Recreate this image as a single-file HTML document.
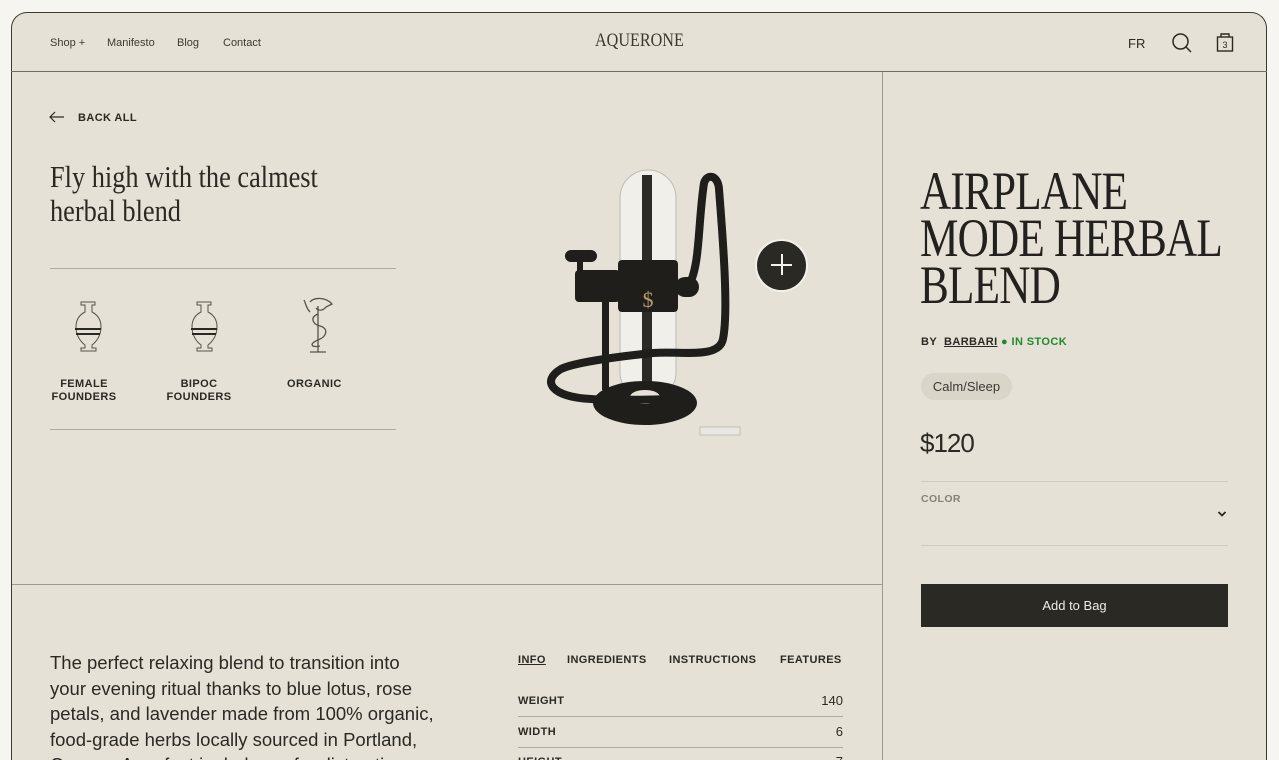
<!DOCTYPE html>
<html><head><meta charset="utf-8"><style>
*{margin:0;padding:0;box-sizing:border-box}
html,body{width:1279px;height:760px;overflow:hidden}
body{background:#f7f5ef;position:relative;font-family:"Liberation Sans",sans-serif;color:#2a2924}
.card{position:absolute;left:11px;top:12px;width:1256px;height:748px;background:#e5e1d6;border:1px solid #3a3933;border-bottom:none;border-radius:16px 16px 0 0;overflow:hidden}
.a{position:absolute}
.nav{font-size:11px;color:#3a3933;top:37px}
.serif{font-family:"Liberation Serif",serif;transform-origin:0 0;white-space:nowrap}
.cap{font-size:11px;font-weight:bold;letter-spacing:.4px;color:#2a2924}
.hl{background:#aeaa9e;height:1px}
</style></head><body>
<div class="card"></div>
<div class="a" style="left:11px;top:71px;width:1256px;height:1px;background:#6f6c62"></div>
<div class="a" style="left:882px;top:72px;width:1px;height:700px;background:#9e9a8f"></div>
<div class="a" style="left:12px;top:584px;width:870px;height:1px;background:#9e9a8f"></div>

<div class="a nav" style="left:50px">Shop +</div>
<div class="a nav" style="left:107px">Manifesto</div>
<div class="a nav" style="left:177px">Blog</div>
<div class="a nav" style="left:223px">Contact</div>
<div class="a serif" style="left:595px;top:30px;font-size:19px;transform:scaleX(.85);color:#3a3933">AQUERONE</div>
<div class="a" style="left:1128px;top:36px;font-size:13px;color:#2a2924">FR</div>
<svg class="a" style="left:1171px;top:32px" width="22" height="22" viewBox="0 0 22 22"><circle cx="9.5" cy="9.5" r="7.5" fill="none" stroke="#2a2924" stroke-width="1.5"/><line x1="15" y1="15" x2="20" y2="20" stroke="#2a2924" stroke-width="1.5"/></svg>
<svg class="a" style="left:1215px;top:31px" width="20" height="22" viewBox="0 0 20 22"><path d="M6 6V3h8v3" fill="none" stroke="#2a2924" stroke-width="1.4"/><rect x="2.5" y="6" width="15" height="14" fill="none" stroke="#2a2924" stroke-width="1.4"/><text x="10" y="17" font-size="9" text-anchor="middle" font-family="Liberation Sans" fill="#2a2924">3</text></svg>

<svg class="a" style="left:49px;top:111px" width="16" height="12"><path d="M15 6H1M6 1L1 6l5 5" fill="none" stroke="#2a2924" stroke-width="1.2"/></svg>
<div class="a cap" style="left:78px;top:112px">BACK ALL</div>

<div class="a serif" style="left:50px;top:160px;font-size:31px;line-height:34px;transform:scaleX(.85);color:#2a2924">Fly high with the calmest<br>herbal blend</div>
<div class="a hl" style="left:50px;top:268px;width:346px"></div>
<div class="a hl" style="left:50px;top:429px;width:346px"></div>

<svg class="a" style="left:70px;top:300px" width="36" height="54" viewBox="0 0 36 54"><path d="M11 2h14v3h-3v7c6 3 9 8 9 15 0 9-5 15-9 18v3h4v3H11v-3h4v-3c-4-3-9-9-9-18 0-7 3-12 9-15V5h-4z" fill="none" stroke="#55534b" stroke-width="1"/><rect x="5" y="28" width="26" height="2" fill="#2a2924"/><rect x="6" y="33" width="24" height="2" fill="#2a2924"/></svg>
<svg class="a" style="left:186px;top:300px" width="36" height="54" viewBox="0 0 36 54"><path d="M11 2h14v3h-3v7c6 3 9 8 9 15 0 9-5 15-9 18v3h4v3H11v-3h4v-3c-4-3-9-9-9-18 0-7 3-12 9-15V5h-4z" fill="none" stroke="#55534b" stroke-width="1"/><rect x="5" y="28" width="26" height="2" fill="#2a2924"/><rect x="6" y="33" width="24" height="2" fill="#2a2924"/></svg>
<svg class="a" style="left:300px;top:296px" width="36" height="60" viewBox="0 0 36 60"><path d="M10 6c4-5 16-5 22 2l-6 3c-3 4-8 4-10 1M18 10v46M18 18c-8 3-6 10 2 12s8 10-2 14-6 8 2 6M10 56h16" fill="none" stroke="#55534b" stroke-width="1.3"/><path d="M4 4c2 4 2 8 6 12" fill="none" stroke="#55534b" stroke-width="1.3"/></svg>
<div class="a cap" style="left:50px;top:378px;width:68px;text-align:center;line-height:13px">FEMALE<br>FOUNDERS</div>
<div class="a cap" style="left:165px;top:378px;width:68px;text-align:center;line-height:13px">BIPOC<br>FOUNDERS</div>
<div class="a cap" style="left:287px;top:378px">ORGANIC</div>

<svg class="a" style="left:520px;top:165px" width="240" height="285" viewBox="0 0 240 285">
<rect x="100" y="5" width="56" height="230" rx="28" fill="#f1efea" stroke="#bdbab2"/>
<rect x="122" y="10" width="10" height="210" fill="#2b2a26"/>
<rect x="98" y="95" width="60" height="52" rx="4" fill="#1f1e1b"/>
<text x="128" y="142" font-size="22" fill="#b59a6c" text-anchor="middle" font-family="Liberation Serif">$</text>
<rect x="55" y="105" width="45" height="32" rx="4" fill="#1f1e1b"/>
<rect x="45" y="85" width="32" height="12" rx="6" fill="#1f1e1b"/>
<rect x="57" y="95" width="6" height="14" fill="#1f1e1b"/>
<rect x="82" y="130" width="7" height="95" fill="#1f1e1b"/>
<ellipse cx="125" cy="238" rx="52" ry="22" fill="#1f1e1b"/>
<ellipse cx="125" cy="232" rx="15" ry="7" fill="#e5e1d6"/>
<rect x="155" y="112" width="24" height="20" rx="10" fill="#1f1e1b"/>
<path d="M170 118c10-20 8-60 14-100 3-10 14-8 15 6 3 40 10 120 4 150-4 20-40 12-70 14-40 4-80 10-92 16-20 12-10 28 30 30 30 2 70 0 90 0" fill="none" stroke="#1f1e1b" stroke-width="8" stroke-linecap="round"/>
<rect x="180" y="262" width="40" height="8" fill="#e9e7e2" stroke="#c3c0b8"/>
</svg>
<div class="a" style="left:755px;top:239px;width:53px;height:53px;border-radius:50%;background:#2a2924;border:2px solid #f3f1ea"></div>
<div class="a" style="left:771px;top:264px;width:21px;height:1.5px;background:#f3f1ea"></div>
<div class="a" style="left:781px;top:254px;width:1.5px;height:21px;background:#f3f1ea"></div>

<div class="a serif" style="left:920px;top:168px;font-size:54px;line-height:47px;transform:scaleX(.8);color:#22211d;letter-spacing:-1px">AIRPLANE<br>MODE HERBAL<br>BLEND</div>
<div class="a cap" style="left:921px;top:336px">BY&nbsp;&nbsp;<span style="text-decoration:underline">BARBARI</span>&nbsp;<span style="color:#1f8a2e">● IN STOCK</span></div>
<div class="a" style="left:921px;top:373px;width:91px;height:27px;border-radius:14px;background:#d9d5c9;font-size:13px;line-height:27px;text-align:center;color:#3a3933">Calm/Sleep</div>
<div class="a" style="left:920px;top:428px;font-size:26px;color:#2a2924;letter-spacing:-1px">$120</div>
<div class="a hl" style="left:921px;top:481px;width:307px;background:#cfcbc0"></div>
<div class="a cap" style="left:921px;top:493px;color:#85827a;font-size:10.5px">COLOR</div>
<svg class="a" style="left:1217px;top:510px" width="10" height="8"><path d="M1.5 2l3.5 3.5L8.5 2" fill="none" stroke="#2a2924" stroke-width="1.8"/></svg>
<div class="a hl" style="left:921px;top:545px;width:307px;background:#cfcbc0"></div>
<div class="a" style="left:921px;top:584px;width:307px;height:43px;background:#2a2924;color:#eeece5;font-size:13px;line-height:43px;text-align:center">Add to Bag</div>

<div class="a" style="left:50px;top:650px;width:385px;font-size:18.5px;line-height:25.5px;color:#2a2924">The perfect relaxing blend to transition into your evening ritual thanks to blue lotus, rose petals, and lavender made from 100% organic, food-grade herbs locally sourced in Portland, Oregon. A perfect ingledence for distraction</div>
<div class="a cap" style="left:518px;top:654px;text-decoration:underline">INFO</div>
<div class="a cap" style="left:567px;top:654px">INGREDIENTS</div>
<div class="a cap" style="left:669px;top:654px">INSTRUCTIONS</div>
<div class="a cap" style="left:780px;top:654px">FEATURES</div>
<div class="a cap" style="left:518px;top:695px">WEIGHT</div><div class="a" style="left:800px;top:693px;width:43px;text-align:right;font-size:13px">140</div>
<div class="a hl" style="left:518px;top:716px;width:325px"></div>
<div class="a cap" style="left:518px;top:726px">WIDTH</div><div class="a" style="left:800px;top:724px;width:43px;text-align:right;font-size:13px">6</div>
<div class="a hl" style="left:518px;top:747px;width:325px"></div>
<div class="a cap" style="left:518px;top:756px">HEIGHT</div><div class="a" style="left:800px;top:754px;width:43px;text-align:right;font-size:13px">7</div>
</body></html>
